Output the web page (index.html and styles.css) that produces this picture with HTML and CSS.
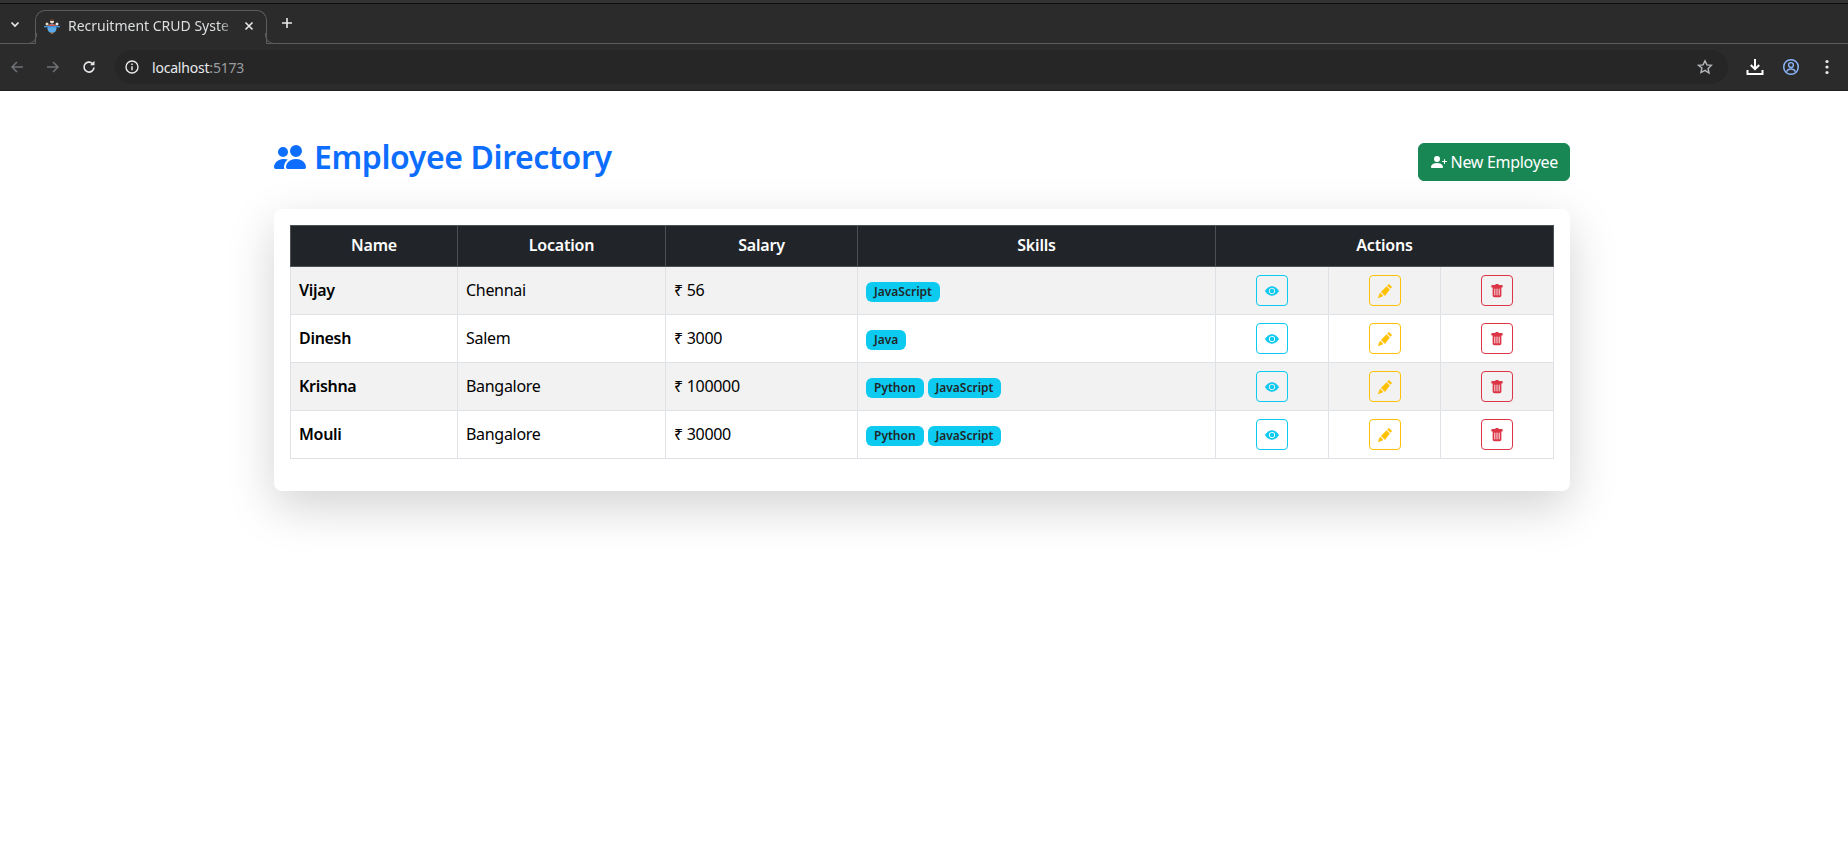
FILE: index.html

```html
<!DOCTYPE html>
<html lang="en">
<head>
  <meta charset="UTF-8">
  <title>Recruitment CRUD System</title>
  <link rel="stylesheet" href="styles.css">
</head>
<body>
  <svg class="sprite" aria-hidden="true">
    <symbol id="i-eye" viewBox="0 0 16 16"><path d="M10.500 8a2.500 2.500 0 1 1-5 0 2.500 2.500 0 0 1 5 0"/><path d="M0 8s3-5.500 8-5.500S16 8 16 8s-3 5.500-8 5.500S0 8 0 8m8 3.500a3.500 3.500 0 1 0 0-7 3.500 3.500 0 0 0 0 7"/></symbol>
    <symbol id="i-pencil" viewBox="0 0 16 16"><path d="M12.854.146a.5.5 0 0 0-.707 0L10.500 1.793 14.207 5.500l1.647-1.646a.5.5 0 0 0 0-.708zm.646 6.061L9.793 2.500 3.293 9H3.500a.5.5 0 0 1 .5.5v.5h.5a.5.5 0 0 1 .5.5v.5h.5a.5.5 0 0 1 .5.5v.5h.5a.5.5 0 0 1 .5.5v.5h.5a.5.5 0 0 1 .5.5v.207zm-7.468 7.468A.5.5 0 0 1 6 13.500V13h-.5a.5.5 0 0 1-.5-.5V12h-.5a.5.5 0 0 1-.5-.5V11h-.5a.5.5 0 0 1-.5-.5V10h-.5a.5.5 0 0 1-.175-.032l-.179.178a.5.5 0 0 0-.11.168l-2 5a.5.5 0 0 0 .65.65l5-2a.5.5 0 0 0 .168-.11z"/></symbol>
    <symbol id="i-trash" viewBox="0 0 16 16"><path d="M2.500 1a1 1 0 0 0-1 1v1a1 1 0 0 0 1 1H3v9a2 2 0 0 0 2 2h6a2 2 0 0 0 2-2V4h.5a1 1 0 0 0 1-1V2a1 1 0 0 0-1-1H10a1 1 0 0 0-1-1H7a1 1 0 0 0-1 1zm3 4a.5.5 0 0 1 .5.5v7a.5.5 0 0 1-1 0v-7a.5.5 0 0 1 .5-.5M8 5a.5.5 0 0 1 .5.5v7a.5.5 0 0 1-1 0v-7A.5.5 0 0 1 8 5m3 .5v7a.5.5 0 0 1-1 0v-7a.5.5 0 0 1 1 0"/></symbol>
  </svg>

  <header class="browser">
    <div class="tabstrip">
      <svg class="chev" viewBox="0 0 12 12"><path d="M2.500 4.500 6 8l3.500-3.500" fill="none" stroke="#e8eaed" stroke-width="1.700"/></svg>
      <div class="tab">
        <svg class="favicon" viewBox="0 0 16 16">
          <circle cx="8" cy="10.500" r="4.500" fill="#5aa9e6"/>
          <path d="M0 8h16v1.400H0z" fill="#3f8fd6"/>
          <path d="M4.500 6.500h7v1.500h-7z" fill="#d9503f"/>
          <circle cx="8" cy="3.500" r="2" fill="#f0e4d8"/>
          <path d="M6 3a2 2 0 0 1 4 0z" fill="#5a3a2a"/>
          <circle cx="3" cy="6" r="1.500" fill="#e8d8c0"/>
          <circle cx="13" cy="6" r="1.500" fill="#e8eaed"/>
          <path d="M6.800 14.500h2.400v1.500H6.800z" fill="#a0683a"/>
        </svg>
        <span class="tab-title">Recruitment CRUD Syste</span>
        <svg class="tab-close" viewBox="0 0 10 10"><path d="M1.500 1.500l7 7M8.500 1.500l-7 7" stroke="#e8eaed" stroke-width="1.600"/></svg>
      </div>
      <svg class="newtab" viewBox="0 0 12 12"><path d="M6 1v10M1 6h10" stroke="#e8eaed" stroke-width="1.600"/></svg>
    </div>
    <div class="toolbar">
      <svg class="nav" viewBox="0 0 16 16"><path d="M14 8H3M8 3 3 8l5 5" fill="none" stroke="#6f7275" stroke-width="1.500"/></svg>
      <svg class="nav" viewBox="0 0 16 16"><path d="M2 8h11M8 3l5 5-5 5" fill="none" stroke="#6f7275" stroke-width="1.500"/></svg>
      <svg class="nav" viewBox="0 0 16 16"><path d="M13 8.500A5 5 0 1 1 11.600 4.600" fill="none" stroke="#e8eaed" stroke-width="1.600"/><path d="M13.500 1.800v4.400H9.100z" fill="#e8eaed"/></svg>
      <div class="omnibox">
        <svg class="info" viewBox="0 0 16 16"><circle cx="8" cy="8" r="6" fill="none" stroke="#e8eaed" stroke-width="1.400"/><path d="M8 7.200v4M8 4.500v1.500" stroke="#e8eaed" stroke-width="1.500"/></svg>
        <span class="url">localhost<span class="port">:5173</span></span>
        <svg class="star" viewBox="0 0 16 16"><path d="M8 1.800l1.900 4.100 4.500.5-3.300 3.100.9 4.500L8 11.300l-4 2.200.9-4.500L1.600 6.400l4.500-.5z" fill="none" stroke="#b5b8bb" stroke-width="1.400"/></svg>
      </div>
      <svg class="tool" viewBox="0 0 18 18"><path d="M9 1v10M4.800 7 9 11.200 13.200 7" fill="none" stroke="#fff" stroke-width="2"/><path d="M1.500 12v4h15v-4" fill="none" stroke="#fff" stroke-width="2"/></svg>
      <svg class="tool" viewBox="0 0 18 18"><circle cx="9" cy="9" r="7.300" fill="none" stroke="#8ab4f8" stroke-width="1.500"/><circle cx="9" cy="7" r="2.400" fill="none" stroke="#8ab4f8" stroke-width="1.400"/><path d="M4.500 13.600c1-2 2.700-2.600 4.500-2.600s3.500.6 4.500 2.600" fill="none" stroke="#8ab4f8" stroke-width="1.400"/></svg>
      <svg class="tool" viewBox="0 0 18 18"><circle cx="9" cy="3.500" r="1.600" fill="#e8eaed"/><circle cx="9" cy="9" r="1.600" fill="#e8eaed"/><circle cx="9" cy="14.500" r="1.600" fill="#e8eaed"/></svg>
    </div>
  </header>

  <main class="page">
    <div class="page-head">
      <h1 class="page-title">
        <svg class="title-icon" viewBox="0 0 16 16"><path d="M7 14s-1 0-1-1 1-4 5-4 5 3 5 4-1 1-1 1zm4-6a3 3 0 1 0 0-6 3 3 0 0 0 0 6m-5.784 6A2.240 2.240 0 0 1 5 13c0-1.355.68-2.750 1.936-3.720A6.300 6.300 0 0 0 5 9c-4 0-5 3-5 4s1 1 1 1zM4.500 8a2.500 2.500 0 1 0 0-5 2.500 2.500 0 0 0 0 5"/></svg>
        Employee Directory
      </h1>
      <button class="btn-new">
        <svg class="btn-new-icon" viewBox="0 0 16 16"><path d="M1 14s-1 0-1-1 1-4 6-4 6 3 6 4-1 1-1 1zm5-6a3 3 0 1 0 0-6 3 3 0 0 0 0 6"/><path d="M13.500 5a.5.5 0 0 1 .5.5V7h1.500a.5.5 0 0 1 0 1H14v1.500a.5.5 0 0 1-1 0V8h-1.500a.5.5 0 0 1 0-1H13V5.500a.5.5 0 0 1 .5-.5"/></svg>
        New Employee
      </button>
    </div>

    <div class="card">
      <table class="emp-table">
        <colgroup>
          <col class="col-name"><col class="col-location"><col class="col-salary"><col class="col-skills">
          <col class="col-act1"><col class="col-act2"><col class="col-act3">
        </colgroup>
        <thead>
          <tr><th>Name</th><th>Location</th><th>Salary</th><th>Skills</th><th colspan="3">Actions</th></tr>
        </thead>
        <tbody>
          <tr>
            <td class="name">Vijay</td><td>Chennai</td><td>₹ 56</td>
            <td class="skills"><span class="skill">JavaScript</span></td>
            <td class="act"><button class="icon-btn view"><svg><use href="#i-eye"/></svg></button></td>
            <td class="act"><button class="icon-btn edit"><svg><use href="#i-pencil"/></svg></button></td>
            <td class="act"><button class="icon-btn del"><svg><use href="#i-trash"/></svg></button></td>
          </tr>
          <tr>
            <td class="name">Dinesh</td><td>Salem</td><td>₹ 3000</td>
            <td class="skills"><span class="skill">Java</span></td>
            <td class="act"><button class="icon-btn view"><svg><use href="#i-eye"/></svg></button></td>
            <td class="act"><button class="icon-btn edit"><svg><use href="#i-pencil"/></svg></button></td>
            <td class="act"><button class="icon-btn del"><svg><use href="#i-trash"/></svg></button></td>
          </tr>
          <tr>
            <td class="name">Krishna</td><td>Bangalore</td><td>₹ 100000</td>
            <td class="skills"><span class="skill">Python</span><span class="skill">JavaScript</span></td>
            <td class="act"><button class="icon-btn view"><svg><use href="#i-eye"/></svg></button></td>
            <td class="act"><button class="icon-btn edit"><svg><use href="#i-pencil"/></svg></button></td>
            <td class="act"><button class="icon-btn del"><svg><use href="#i-trash"/></svg></button></td>
          </tr>
          <tr>
            <td class="name">Mouli</td><td>Bangalore</td><td>₹ 30000</td>
            <td class="skills"><span class="skill">Python</span><span class="skill">JavaScript</span></td>
            <td class="act"><button class="icon-btn view"><svg><use href="#i-eye"/></svg></button></td>
            <td class="act"><button class="icon-btn edit"><svg><use href="#i-pencil"/></svg></button></td>
            <td class="act"><button class="icon-btn del"><svg><use href="#i-trash"/></svg></button></td>
          </tr>
        </tbody>
      </table>
    </div>
  </main>
</body>
</html>
```

FILE: styles.css

```css
* {
  box-sizing: border-box;
}

html, body {
  height: 100%;
}

body {
  margin: 0;
  background: #fff;
  color: #212529;
  font-family: "Noto Sans", sans-serif;
  font-size: 16px;
  overflow: hidden;
}

.sprite {
  display: none;
}

/* browser chrome */
.browser {
  height: 91px;
  background: #2b2b2b;
  border-top: 3px solid #333;
  border-bottom: 1px solid #1f1f1f;
  box-shadow: inset 0 1px 0 #0d0d0d;
  color: #e8eaed;
}

.tabstrip {
  display: flex;
  align-items: center;
  height: 40px;
  padding-left: 9px;
}

.chev {
  width: 12px;
  height: 12px;
  margin-top: 2px;
}

.tab {
  position: relative;
  z-index: 1;
  display: flex;
  align-items: center;
  align-self: flex-end;
  width: 232px;
  height: 34px;
  margin-bottom: -1px;
  margin-left: 14px;
  padding: 0 12px 4px 8px;
  background: #2b2b2b;
  border: 1px solid #5c5c5c;
  border-bottom: 0;
  border-radius: 10px 10px 0 0;
}

/* the curves where the tab meets the toolbar line */
.tab::before,
.tab::after {
  content: "";
  position: absolute;
  bottom: 0;
  width: 9px;
  height: 10px;
  border-bottom: 1px solid #5c5c5c;
}

.tab::before {
  left: -9px;
  border-right: 1px solid #5c5c5c;
  border-radius: 0 0 9px 0;
}

.tab::after {
  right: -9px;
  border-left: 1px solid #5c5c5c;
  border-radius: 0 0 0 9px;
}

.favicon {
  width: 16px;
  height: 16px;
  flex: none;
}

.tab-title {
  flex: 1;
  margin-left: 8px;
  white-space: nowrap;
  font-size: 14px;
  color: #dcdee0;
  -webkit-mask-image: linear-gradient(90deg, #000 90%, transparent 100%);
  mask-image: linear-gradient(90deg, #000 90%, transparent 100%);
}

.tab-close {
  width: 10px;
  height: 10px;
  flex: none;
  margin-left: 8px;
}

.newtab {
  width: 12px;
  height: 12px;
  margin-left: 14px;
}

.toolbar {
  display: flex;
  align-items: center;
  height: 47px;
  padding-left: 9px;
  border-top: 1px solid #5c5c5c;
}

.nav {
  width: 16px;
  height: 16px;
  margin-right: 20px;
}

.omnibox {
  display: flex;
  align-items: center;
  width: 1613px;
  height: 34px;
  margin-left: -2px;
  padding: 0 15px 0 9px;
  background: #262626;
  border-radius: 17px;
}

.info {
  width: 16px;
  height: 16px;
}

.url {
  flex: 1;
  margin-left: 12px;
  font-size: 14px;
  letter-spacing: -0.2px;
}

.port {
  color: #9a9da0;
}

.star {
  width: 16px;
  height: 16px;
}

.tool {
  width: 18px;
  height: 18px;
  margin-left: 18px;
}

/* page */
.page {
  width: 1296px;
  margin-left: 274px;
}

.page-head {
  display: flex;
  justify-content: space-between;
  align-items: flex-start;
  padding-top: 47px;
  margin-bottom: 28px;
}

.page-title {
  display: flex;
  align-items: center;
  gap: 8px;
  margin: 0;
  color: #0d6efd;
  font-size: 32px;
  font-weight: 600;
  letter-spacing: -0.4px;
  line-height: 38px;
}

.title-icon {
  width: 32px;
  height: 32px;
  fill: #0d6efd;
}

.btn-new {
  display: flex;
  align-items: center;
  gap: 4px;
  height: 38px;
  margin-top: 5px;
  padding: 0 11px 0 12px;
  background: #198754;
  border: 1px solid #198754;
  border-radius: 6px;
  color: #fff;
  font: inherit;
  letter-spacing: -0.3px;
}

.btn-new-icon {
  width: 16px;
  height: 16px;
  fill: #fff;
}

.card {
  padding: 16px;
  background: #fff;
  border-radius: 8px;
  box-shadow: 0 16px 48px rgba(0,0,0,0.175);
}

.emp-table {
  width: 1263px;
  margin-bottom: 16px;
  border-collapse: collapse;
  table-layout: fixed;
}

.col-name { width: 167px; }
.col-location { width: 208px; }
.col-salary { width: 192px; }
.col-skills { width: 358px; }
.col-act1 { width: 113px; }
.col-act2 { width: 112px; }
.col-act3 { width: 113px; }

.emp-table th {
  height: 41px;
  padding: 0 8px 2px;
  background: #212529;
  border: 1px solid #4d5154;
  color: #fff;
  font-weight: 600;
  letter-spacing: -0.2px;
  text-align: center;
}

.emp-table td {
  height: 48px;
  padding: 0 8px 2px;
  border: 1px solid #dee2e6;
  color: #000;
  letter-spacing: -0.3px;
}

.emp-table tbody tr:nth-child(odd) td {
  background: #f2f2f2;
}

.emp-table td.name {
  font-weight: 600;
}

.emp-table td.skills {
  padding-bottom: 0;
}

.skill {
  display: inline-block;
  margin-top: 2px;
  margin-right: 4px;
  padding: 0 8px;
  background: #0dcaf0;
  border-radius: 6px;
  color: #212529;
  font-size: 12px;
  font-weight: 600;
  letter-spacing: 0;
  line-height: 20px;
}

.emp-table td.act {
  padding-bottom: 0;
  text-align: center;
}

.icon-btn {
  display: inline-flex;
  align-items: center;
  justify-content: center;
  width: 32px;
  height: 31px;
  padding: 0;
  vertical-align: middle;
  background: transparent;
  border: 1px solid;
  border-radius: 4px;
}

.icon-btn svg {
  width: 14px;
  height: 14px;
  fill: currentColor;
}

.view { color: #0dcaf0; }
.edit { color: #ffc107; }
.del { color: #dc3545; }
```
